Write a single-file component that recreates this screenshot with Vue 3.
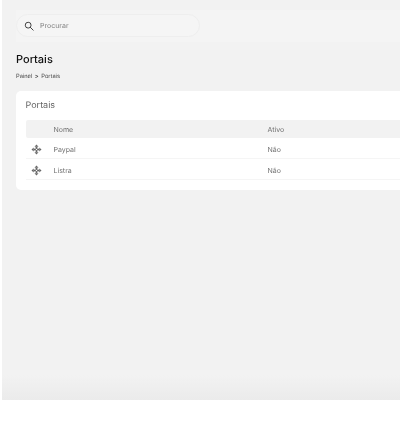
<script setup>
const rows = [
  { nome: 'Paypal', ativo: 'Não' },
  { nome: 'Listra', ativo: 'Não' },
]
</script>

<template>
  <div class="page">
    <main class="main">
      <div class="topbar">
        <div class="search">
          <svg class="search-icon" viewBox="0 0 24 24" width="10" height="10" fill="none" stroke="#444" stroke-width="2.4">
            <circle cx="10" cy="10" r="7" />
            <path d="M15 15l7 7" stroke-linecap="round" />
          </svg>
          <span class="placeholder">Procurar</span>
        </div>
      </div>
      <h1 class="title">Portais</h1>
      <div class="crumbs">Painel <span class="sep">&gt;</span> Portais</div>
      <section class="card">
        <h2 class="card-title">Portais</h2>
        <div class="table">
          <div class="row head">
            <span class="c-icon"></span>
            <span class="c-name">Nome</span>
            <span class="c-active">Ativo</span>
          </div>
          <div v-for="r in rows" :key="r.nome" class="row body">
            <span class="c-icon">
              <svg viewBox="0 0 24 24" width="11" height="11" fill="#666">
                <path d="M12 1l4.500 5h-9zM12 23l-4.500-5h9zM1 12l5-4.500v9zM23 12l-5 4.500v-9z" />
                <circle cx="12" cy="8.500" r="2.300" />
                <circle cx="12" cy="15.500" r="2.300" />
                <circle cx="8.500" cy="12" r="2.300" />
                <circle cx="15.500" cy="12" r="2.300" />
              </svg>
            </span>
            <span class="c-name">{{ r.nome }}</span>
            <span class="c-active">{{ r.ativo }}</span>
          </div>
        </div>
      </section>
    </main>
  </div>
</template>

<style>
html, body { margin: 0; background: #fff; overflow: hidden; }
</style>

<style scoped>
.page {
  width: 400px;
  height: 424px;
  background: #fff;
  font-family: Inter, "Liberation Sans", sans-serif;
  text-rendering: geometricPrecision;
  overflow: hidden;
  filter: grayscale(1) blur(0.25px);
}
.main {
  margin-left: 2px;
  height: 400px;
  box-sizing: border-box;
  padding: 10px 0 0 14px;
  background: linear-gradient(to bottom, #f2f2f2 0, #f2f2f2 375px, #ebebeb 400px);
  overflow: hidden;
}
.topbar {
  height: 32px;
  background: #f4f4f4;
  display: flex;
  align-items: flex-start;
  margin-right: -10px;
}
.search {
  width: 184px;
  height: 23px;
  box-sizing: border-box;
  margin-top: 4px;
  border: 1px solid #eeeeee;
  border-radius: 12px;
  background: #f5f5f5;
  display: flex;
  align-items: center;
  padding-left: 7px;
  gap: 6px;
}
.placeholder {
  font-size: 7px;
  color: #808080;
}
.search-icon { flex: none; }
.title {
  margin: 9px 0 0;
  font-size: 11px;
  line-height: 16px;
  font-weight: 500;
  color: #111;
}
.crumbs {
  margin-top: 6px;
  font-size: 5.700px;
  line-height: 8px;
  color: #444;
}
.sep { margin: 0 1px; font-weight: 600; }
.card {
  margin-top: 10px;
  width: 420px;
  height: 99px;
  box-sizing: border-box;
  padding: 9px 0 0 9.500px;
  background: #fff;
  border-radius: 5px;
}
.card-title {
  margin: 0;
  font-size: 9px;
  line-height: 12px;
  font-weight: 400;
  color: #666;
}
.table { margin-top: 8px; }
.row {
  display: flex;
  align-items: center;
  font-size: 7px;
  font-weight: 400;
  color: #707070;
}
.head {
  height: 18px;
  background: #f2f2f2;
  border-radius: 2px 0 0 2px;
}
.body {
  height: 21px;
  box-sizing: border-box;
  padding-top: 2px;
  border-bottom: 1px solid #f5f5f5;
}
.c-icon {
  width: 22px;
  margin-right: 6px;
  display: flex;
  justify-content: center;
  flex: none;
}
.c-name { width: 214px; flex: none; }
</style>
